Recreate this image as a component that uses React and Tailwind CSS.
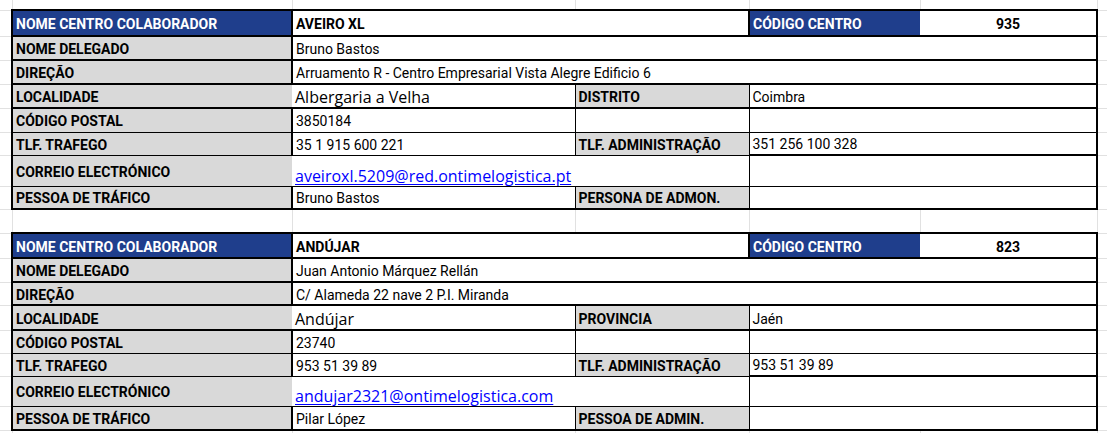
import React from 'react';

const blocks = [
  {
    nome: 'AVEIRO XL',
    codigo: '935',
    delegado: 'Bruno Bastos',
    direcao: 'Arruamento R - Centro Empresarial Vista Alegre Edificio 6',
    localidade: 'Albergaria a Velha',
    regiaoLabel: 'DISTRITO',
    regiao: 'Coimbra',
    cp: '3850184',
    tlf: '35 1 915 600 221',
    tlfAdm: '351 256 100 328',
    email: 'aveiroxl.5209@red.ontimelogistica.pt',
    pessoa: 'Bruno Bastos',
    adminLabel: 'PERSONA DE ADMON.',
    h: ['h-[26px]', 'h-[24px]', 'h-[24px]', 'h-[24px]', 'h-[24px]', 'h-[23px]', 'h-[31px]', 'h-[23px]'],
  },
  {
    nome: 'ANDÚJAR',
    codigo: '823',
    delegado: 'Juan Antonio Márquez Rellán',
    direcao: 'C/ Alameda 22 nave 2 P.I. Miranda',
    localidade: 'Andújar',
    regiaoLabel: 'PROVINCIA',
    regiao: 'Jaén',
    cp: '23740',
    tlf: '953 51 39 89',
    tlfAdm: '953 51 39 89',
    email: 'andujar2321@ontimelogistica.com',
    pessoa: 'Pilar López',
    adminLabel: 'PESSOA DE ADMIN.',
    h: ['h-[25px]', 'h-[24px]', 'h-[23px]', 'h-[25px]', 'h-[23px]', 'h-[23px]', 'h-[30px]', 'h-[24px]'],
  },
];

// celulas de margem (grelha cinzenta da folha)
const Margin = () => <td className="border-b border-[#e1e1e1] p-0" />;

const Spacer = ({ h }) => (
  <tr className={h}>
    {[0, 1, 2, 3, 4, 5, 6].map((i) => (
      <td key={i} className="border-r border-b border-[#e1e1e1] p-0" />
    ))}
  </tr>
);

const label = 'bg-[#d9d9d9] font-bold text-[14px] text-black px-[3px] pt-[2px] whitespace-nowrap overflow-hidden';
const value = 'bg-white text-[14px] text-black px-[3px] pt-[2px] whitespace-nowrap overflow-hidden';
const big = "font-['Open_Sans',sans-serif] text-[16px]";

const Block = ({ b }) => (
  <>
    {/* Cabeçalho */}
    <tr className={b.h[0]}>
      <Margin />
      <td className="bg-[#1f3e8c] text-white font-bold text-[14px] px-[3px] pt-[2px] border-2 border-black whitespace-nowrap">NOME CENTRO COLABORADOR</td>
      <td colSpan={2} className="bg-white font-bold text-[14px] px-[3px] pt-[2px] border-2 border-black whitespace-nowrap">{b.nome}</td>
      <td className="bg-[#1f3e8c] text-white font-bold text-[14px] px-[3px] pt-[2px] border-y-2 border-l-2 border-black whitespace-nowrap">CÓDIGO CENTRO</td>
      <td className="bg-white font-bold text-[14px] pt-[2px] text-center border-y-2 border-r-2 border-black">{b.codigo}</td>
      <Margin />
    </tr>
    <tr className={b.h[1]}>
      <Margin />
      <td className={`${label} border-2 border-black`}>NOME DELEGADO</td>
      <td colSpan={4} className={`${value} border-2 border-black`}>{b.delegado}</td>
      <Margin />
    </tr>
    <tr className={b.h[2]}>
      <Margin />
      <td className={`${label} border-2 border-black`}>DIREÇÃO</td>
      <td colSpan={4} className={`${value} border-2 border-black`}>{b.direcao}</td>
      <Margin />
    </tr>
    <tr className={b.h[3]}>
      <Margin />
      <td className={`${label} border-l-2 border-y-2 border-black`}>LOCALIDADE</td>
      <td className={`${value} ${big} border-y-2 border-black`}>{b.localidade}</td>
      <td className={`${label} border-y-2 border-x border-black`}>{b.regiaoLabel}</td>
      <td colSpan={2} className={`${value} border-y-2 border-r-2 border-l border-black`}>{b.regiao}</td>
      <Margin />
    </tr>
    <tr className={b.h[4]}>
      <Margin />
      <td className={`${label} border-l-2 border-r-2 border-b border-black`}>CÓDIGO POSTAL</td>
      <td className={`${value} border-b border-black`}>{b.cp}</td>
      <td className={`${value} border-x border-b border-black`} />
      <td colSpan={2} className={`${value} border-r-2 border-b border-black`} />
      <Margin />
    </tr>
    <tr className={b.h[5]}>
      <Margin />
      <td className={`${label} border-l-2 border-r-2 border-b border-black`}>TLF. TRAFEGO</td>
      <td className={`${value} border-b border-black`}>{b.tlf}</td>
      <td className={`${label} border-x border-b border-black`}>TLF. ADMINISTRAÇÃO</td>
      <td colSpan={2} className={`${value} border-r-2 border-b-2 border-black`}>{b.tlfAdm}</td>
      <Margin />
    </tr>
    <tr className={b.h[6]}>
      <Margin />
      <td className={`${label} border-l-2 border-b border-black`}>CORREIO ELECTRÓNICO</td>
      <td colSpan={2} className={`${value} ${big} align-bottom pb-[2px] border-b border-black`}>
        <a href="#" className="text-[#0000ff] underline underline-offset-[2px]">{b.email}</a>
      </td>
      <td colSpan={2} className={`${value} border-l border-r-2 border-b border-black`} />
      <Margin />
    </tr>
    <tr className={b.h[7]}>
      <Margin />
      <td className={`${label} border-l-2 border-r-2 border-b-2 border-black`}>PESSOA DE TRÁFICO</td>
      <td className={`${value} border-b-2 border-black`}>{b.pessoa}</td>
      <td className={`${label} border-x border-b-2 border-black`}>{b.adminLabel}</td>
      <td colSpan={2} className={`${value} border-r-2 border-b-2 border-black`} />
      <Margin />
    </tr>
  </>
);

const App = () => {
  return (
    <div className="w-[1107px] h-[433px] bg-white overflow-hidden font-['Roboto',sans-serif] text-black">
      <table className="table-fixed border-collapse w-[1107px] leading-none">
        <colgroup>
          <col className="w-[12px]" />
          <col className="w-[280px]" />
          <col className="w-[283px]" />
          <col className="w-[174px]" />
          <col className="w-[171px]" />
          <col className="w-[177px]" />
          <col className="w-[10px]" />
        </colgroup>
        <tbody>
          <Spacer h="h-[10px]" />
          <Block b={blocks[0]} />
          <Spacer h="h-[24px]" />
          <Block b={blocks[1]} />
          <Spacer h="h-[10px]" />
        </tbody>
      </table>
    </div>
  );
};

export default App;
